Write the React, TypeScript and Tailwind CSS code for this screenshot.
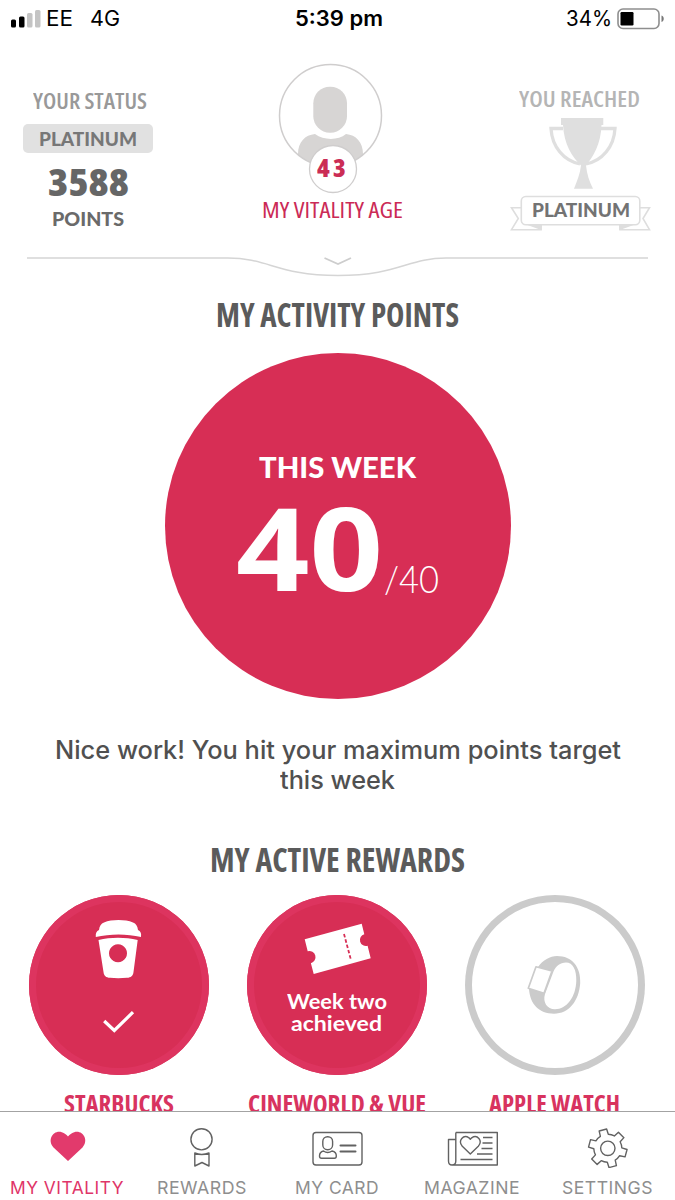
import { useLayoutEffect, useRef, type ReactNode } from "react";

const condensed = "font-['Open_Sans',sans-serif] [font-stretch:75%]";
const humanist = "font-['Lato',sans-serif]";
const system = "font-['Inter',sans-serif]";

/** One line of lettering, set to fill exactly the width of its box. */
function FitText({ className, children }: { className: string; children: ReactNode }) {
  const box = useRef<HTMLSpanElement>(null);
  const line = useRef<HTMLSpanElement>(null);
  useLayoutEffect(() => {
    if (!box.current || !line.current) return;
    line.current.style.transform = "none";
    const natural = line.current.getBoundingClientRect().width;
    const target = box.current.getBoundingClientRect().width;
    line.current.style.transform = `scaleX(${target / natural})`;
  });
  return (
    <span ref={box} className={`block shrink-0 ${className}`}>
      <span ref={line} className="inline-block origin-left whitespace-nowrap align-top">
        {children}
      </span>
    </span>
  );
}

function StatusBar() {
  return (
    <div className="flex h-[37px] items-center pl-[11px] pr-[10px] text-black">
      <svg width="30" height="18" viewBox="0 0 30 18">
        <rect x="0" y="9.5" width="5" height="8" rx="1.5" />
        <rect x="8" y="6.5" width="5.5" height="11" rx="1.5" />
        <rect x="16" y="3" width="5.5" height="14.5" rx="1.5" fill="#c4c4c4" />
        <rect x="24" y="0" width="5.5" height="17.5" rx="1.5" fill="#c4c4c4" />
      </svg>
      <FitText className={`ml-[5px] w-[27px] text-[21px] leading-[37px] ${system}`}>EE</FitText>
      <FitText className={`ml-[17px] w-[30px] text-[21px] leading-[37px] ${system}`}>4G</FitText>
      <FitText className={`ml-[175px] w-[88px] text-[21px] font-semibold leading-[37px] ${system}`}>5:39 pm</FitText>
      <FitText className={`ml-auto w-[46px] text-[21px] leading-[37px] ${system}`}>34%</FitText>
      <svg className="ml-[5px]" width="48" height="22" viewBox="0 0 48 22">
        <rect x="1" y="1" width="41" height="19.5" rx="5" fill="none" stroke="#8e8e8e" strokeWidth="1.6" />
        <rect x="3.500" y="4" width="13" height="13.5" rx="1.2" />
        <path d="M44.5 7.5c3 1.2 3 5.300 0 6.500z" fill="#777" />
      </svg>
    </div>
  );
}

function YourStatus() {
  return (
    <div className="ml-[23px] mt-[51px] flex w-[130px] flex-col items-center">
      <FitText className={`ml-[4px] w-[114px] text-[21.5px] font-semibold leading-[25px] text-[#999] ${condensed}`}>
        YOUR STATUS
      </FitText>
      <div className="mt-[11px] flex h-[29px] w-full justify-center rounded-[5px] bg-[#e1e1e1]">
        <FitText className={`w-[98px] text-[18px] font-black leading-[30px] text-[#777] ${humanist}`}>PLATINUM</FitText>
      </div>
      <FitText className={`mt-[11px] w-[81px] text-[37.500px] font-extrabold leading-[36px] text-[#666] ${condensed}`}>
        3588
      </FitText>
      <FitText className={`mt-[9px] w-[72px] text-[18px] font-black leading-[20px] text-[#6a6a6a] ${humanist}`}>
        POINTS
      </FitText>
    </div>
  );
}

function VitalityAge() {
  return (
    <div className="mt-[25px] flex flex-col items-center pl-[2px]">
      <div className="relative h-[132px] w-[110px]">
        <svg width="110" height="132" viewBox="0 0 110 132">
          <clipPath id="portrait">
            <circle cx="52.500" cy="53.500" r="51" />
          </clipPath>
          <g clipPath="url(#portrait)" fill="#d7d5d4">
            <rect x="35.300" y="24.700" width="33.700" height="46" rx="16.500" />
            <path d="M20 104V92C20 80 27 73 37 72C46 78.500 60 78.500 68 72C78 73 85 80 85 92V104Z" />
          </g>
          <circle cx="52.500" cy="53.500" r="51" fill="none" stroke="#cfcdcd" strokeWidth="1.500" />
          <circle cx="55" cy="107" r="23.500" fill="#fff" stroke="#cfcdcd" strokeWidth="1.300" />
        </svg>
        <div className="absolute left-[39px] top-[93px]">
          <FitText className={`w-[32px] text-[24px] font-extrabold leading-[26px] tracking-[3px] text-[#cb2d55] ${condensed}`}>
            43
          </FitText>
        </div>
      </div>
      <FitText className={`mt-[4px] w-[141px] text-[21px] font-medium leading-[25px] text-[#cb2a56] ${condensed}`}>
        MY VITALITY AGE
      </FitText>
    </div>
  );
}

function YouReached() {
  return (
    <div className="mr-[23px] mt-[49px] flex w-[142px] flex-col items-center">
      <FitText className={`ml-[-3px] w-[121px] text-[22px] font-semibold leading-[24px] text-[#b5b5b5] ${condensed}`}>
        YOU REACHED
      </FitText>
      <div className="relative mt-[4px] h-[120px] w-[142px]">
        <svg width="142" height="120" viewBox="0 0 142 120">
          <path d="M51 4H93.300V11H91.500C91 30 83 43 76 51.500C77 60 79 67 83 74.700H64C67 67 70 60 71 51.500C62 43 54 30 53 11H51Z" fill="#dfdfdf" />
          <path d="M53 14.500H41C42 33 54 47 70 50M91 14.500H105C104 33 92 47 76 50" fill="none" stroke="#dfdfdf" strokeWidth="3.300" />
          <g fill="#fff" stroke="#dedede" strokeWidth="1.600">
            <path d="M11.300 93.700H1.500L8.300 104.500L1.500 115.700H31V110.700" />
            <path d="M130 93.700H139.500L133 104.500L139.500 115.700H110V110.700" />
            <path d="M11.500 108L31 115V110.700ZM129.500 108L110 115V110.700Z" fill="#dedede" />
            <rect x="11.300" y="82.500" width="118.500" height="28.200" rx="4.500" />
          </g>
        </svg>
        <div className="absolute left-[22px] top-[84px]">
          <FitText className={`w-[98px] text-[18.500px] font-black leading-[25px] text-[#737373] ${humanist}`}>PLATINUM</FitText>
        </div>
      </div>
    </div>
  );
}

function Divider() {
  return (
    <svg className="block" width="675" height="30" viewBox="0 0 675 30" fill="none">
      <path d="M27 8H228C268 8 278 25.500 338 25.500S408 8 446 8H648" stroke="#d5d5d5" strokeWidth="1.500" />
      <path d="M324.500 8L338 14L351 8" stroke="#cdcdcd" strokeWidth="1.800" />
    </svg>
  );
}

function SectionTitle({ className, children }: { className: string; children: ReactNode }) {
  return (
    <h2 className={`flex justify-center text-[33px] font-bold leading-[40px] text-[#5b5b5b] ${condensed}`}>
      <FitText className={className}>{children}</FitText>
    </h2>
  );
}

function PointsDial() {
  return (
    <div className="mx-auto mt-[18px] flex size-[346px] flex-col items-center rounded-full bg-[#d72e55] text-white">
      <FitText className={`mt-[94px] w-[157px] text-[28px] font-black leading-[40px] ${humanist}`}>THIS WEEK</FitText>
      <div className="mt-[18px] flex items-end">
        <FitText className="w-[147px] font-['Open_Sans',sans-serif] text-[115.500px] font-bold leading-[84px]">40</FitText>
        <FitText className={`mb-[-8px] ml-px w-[55px] text-[37px] font-light leading-[36px] ${humanist}`}>/40</FitText>
      </div>
    </div>
  );
}

function CupIcon() {
  return (
    <svg width="180" height="180" viewBox="0 0 180 180" fill="#fff">
      <path d="M66.800 42C66.500 38 67.500 36 70 35C70.500 31 72 28.500 75 27.500C83 24.300 96 24.300 104 27.500C107 28.500 108.500 31 109 35C111.500 36 112.500 38 112 42C98 38.500 81 38.500 66.800 42Z" />
      <path fillRule="evenodd" d="M69.500 45C82 42 96 42 108.700 45L104.500 77C104 81 102 82.500 98 82.800Q89 83.500 81 82.800C77 82.500 75 81 74.500 77ZM89 49.300a9 9 0 1 0 .01 0Z" />
      <path d="M75.200 126L85.300 135.500L104 117.200" fill="none" stroke="#fff" strokeWidth="3.200" />
    </svg>
  );
}

function TicketIcon() {
  return (
    <svg width="180" height="88" viewBox="0 0 180 88">
      <path d="M57.700 44.300L114.700 28.700L117.300 39.200A5.900 5.900 0 0 0 120.600 50.800L123.700 63.300L66.700 79L63.900 68.200A6 6 0 0 0 60.700 56.200Z" fill="#fff" />
      <path d="M97 39L103.700 64" stroke="#d72e55" strokeWidth="1.800" strokeDasharray="3.500 2" />
    </svg>
  );
}

function WatchIcon() {
  return (
    <svg width="180" height="180" viewBox="0 0 180 180">
      <path
        fillRule="evenodd"
        fill="#cbcbcb"
        d="M92 61C107 61 116 72 115.200 88C114 106 104 118.700 89 118.700C74 118.700 65 109 64 94L73 72C78 65 85 61 92 61ZM101 67.500C95 67.500 91 71 88.500 76.500L80 99C77.500 107 82 114.300 90 114.300C102 114 110.700 102 111.300 86C111.700 75 108 67.500 101 67.500Z"
      />
      <path d="M71 71.800L87 76L79 98.200L63.300 93.200Z" fill="#fff" stroke="#cbcbcb" strokeWidth="1.700" strokeLinejoin="round" />
    </svg>
  );
}

function Rewards() {
  const label = `mt-[16px] text-[24.500px] font-bold leading-[26px] text-[#d8335f] ${condensed}`;
  const done = "size-[180px] rounded-full shadow-[inset_0_0_0_7px_#dd345f] bg-[#d72e55]";
  return (
    <div className="mt-[15px] flex justify-between pl-[29px] pr-[30px]">
      <div className="flex w-[180px] flex-col items-center">
        <div className={done}>
          <CupIcon />
        </div>
        <FitText className={`ml-[-1px] w-[110px] ${label}`}>STARBUCKS</FitText>
      </div>
      <div className="flex w-[180px] flex-col items-center">
        <div className={`flex flex-col items-center text-[21.500px] font-bold leading-[22px] text-white ${humanist} ${done}`}>
          <TicketIcon />
          <FitText className="ml-[-1px] mt-[7px] w-[100px]">Week two</FitText>
          <FitText className="ml-[-1px] w-[91px]">achieved</FitText>
        </div>
        <FitText className={`ml-[-1px] w-[178px] ${label}`}>CINEWORLD &amp; VUE</FitText>
      </div>
      <div className="flex w-[180px] flex-col items-center">
        <div className="size-[180px] rounded-full shadow-[inset_0_0_0_7px_#cbcbcb]">
          <WatchIcon />
        </div>
        <FitText className={`ml-[-1px] w-[131px] ${label}`}>APPLE WATCH</FitText>
      </div>
    </div>
  );
}

function gearPath(cx: number, cy: number) {
  const points: string[] = [];
  for (let i = 0; i < 6; i++) {
    const a = i * 60 + 15;
    const corners: [number, number][] = [
      [14, -17],
      [19.3, -11.5],
      [19.3, 11.5],
      [14, 17],
    ];
    corners.forEach(([r, d], k) => {
      const t = ((a + d) * Math.PI) / 180;
      const p = `${(cx + r * Math.cos(t)).toFixed(2)} ${(cy + r * Math.sin(t)).toFixed(2)}`;
      points.push(k === 0 && i > 0 ? `A14 14 0 0 1 ${p}` : `${points.length ? "L" : "M"}${p}`);
    });
  }
  const t0 = (-2 * Math.PI) / 180;
  return `${points.join("")}A14 14 0 0 1 ${(cx + 14 * Math.cos(t0)).toFixed(2)} ${(cy + 14 * Math.sin(t0)).toFixed(2)}Z`;
}

function Tab({ label, width, active, children }: { label: string; width: string; active?: boolean; children: ReactNode }) {
  return (
    <div className={`flex w-[135px] flex-col items-center pt-[12px] ${active ? "text-[#df3568]" : "text-[#8e8e8e]"}`}>
      <svg width="60" height="44" viewBox="0 0 60 44" fill="none" stroke="#626262" strokeWidth="1.400" strokeLinejoin="round">
        {children}
      </svg>
      <FitText className={`ml-[-1px] mt-[8px] text-[17.500px] leading-[24px] tracking-[0.500px] ${system} ${width}`}>{label}</FitText>
    </div>
  );
}

function TabBar() {
  return (
    <nav className="flex h-[89px] border-t border-[#a3a3a3] bg-white">
      <Tab label="MY VITALITY" width="w-[114px]" active>
        <path d="M30 37L15.500 23.500C8 15 17 3.500 26.500 9.500Q29 11 30 12.500Q31 11 33.500 9.500C43 3.500 52 15 44.500 23.500Z" fill="#e23a6c" stroke="none" />
      </Tab>
      <Tab label="REWARDS" width="w-[90px]">
        <circle cx="28.500" cy="15.300" r="10.600" />
        <path d="M21.800 29Q28.500 32 36 29V42L29 38.500L21.800 42Z" />
      </Tab>
      <Tab label="MY CARD" width="w-[84px]">
        <rect x="5" y="8.500" width="49" height="32.500" rx="3" />
        <rect x="14.800" y="12.700" width="9.800" height="13" rx="4.700" />
        <path d="M15.500 27Q19.700 30 24 27Q28.500 28 28.300 32Q28.300 34.300 26.500 34.300H13.500Q11.500 34.300 11.500 32Q11.500 28 15.500 27Z" />
        <path d="M32.500 21.500H47.500M32.500 27.500H47.500" strokeWidth="2" strokeLinecap="round" />
      </Tab>
      <Tab label="MAGAZINE" width="w-[96px]">
        <path d="M12.800 8.500H54.300V41H9C6.500 41 5.500 39.500 5.500 37V15.500H12.800M12.800 8.500V37C12.800 39.500 11.500 41 9 41" />
        <path d="M27.300 30L19.300 22.300C14.500 16.500 20.500 10 26 13.800L27.300 15.300L28.700 13.800C34.200 10 40.200 16.500 35.300 22.300Z" />
        <path d="M40 13.500H49.500M39.500 19H49.500M38.500 24.500H49.500M34 30H49.500M17.500 35.500H49.500" />
      </Tab>
      <Tab label="SETTINGS" width="w-[91px]">
        <path d={gearPath(29.8, 24.3)} />
        <circle cx="29.800" cy="24.300" r="7.200" />
      </Tab>
    </nav>
  );
}

export default function App() {
  return (
    <div className="flex h-[1200px] w-[675px] flex-col overflow-hidden bg-white">
      <main className="h-[1111px] overflow-hidden">
        <StatusBar />
        <header className="flex h-[213px] items-start justify-between">
          <YourStatus />
          <VitalityAge />
          <YouReached />
        </header>
        <Divider />
        <div className="mt-[15px] pr-px">
          <SectionTitle className="w-[243px]">MY ACTIVITY POINTS</SectionTitle>
        </div>
        <PointsDial />
        <p className={`mt-[36px] flex flex-col items-center text-[25px] font-medium leading-[30px] text-[#505050] ${system}`}>
          <FitText className="w-[566px]">Nice work! You hit your maximum points target</FitText>
          <FitText className="w-[115px]">this week</FitText>
        </p>
        <div className="mt-[45px] pr-px">
          <SectionTitle className="w-[255px]">MY ACTIVE REWARDS</SectionTitle>
        </div>
        <Rewards />
      </main>
      <TabBar />
    </div>
  );
}
